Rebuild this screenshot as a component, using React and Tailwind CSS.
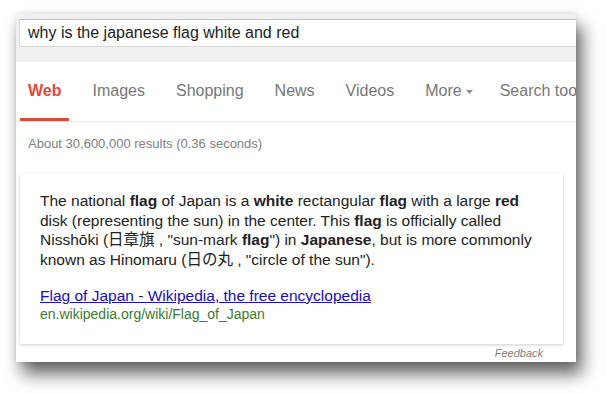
import React from 'react';

const tabs = ['Web', 'Images', 'Shopping', 'News', 'Videos', 'More', 'Search tools'];

const Tab = ({ label, active }) => (
  <div className="flex flex-col shrink-0">
    <div
      className={`h-[56px] pt-[2px] flex items-center text-[16px] whitespace-nowrap ${
        label === 'More' ? 'pl-2 pr-1' : 'px-2'
      } ${active ? 'font-bold text-[#dd4b39]' : 'text-[#777777]'}`}
    >
      {label}
      {label === 'More' && (
        <svg width="7" height="4" viewBox="0 0 7 4" className="ml-[4px] mt-[1px]">
          <path d="M0 0h7L3.5 4z" fill="#909090" />
        </svg>
      )}
    </div>
    <div className={`h-[3px] ${active ? 'bg-[#dd4b39]' : 'bg-transparent'}`} />
  </div>
);

export default function App() {
  return (
    <div className="w-[606px] h-[394px] bg-white pl-[16px] pt-[14px] font-['Liberation_Sans','Noto_Sans_CJK_JP',sans-serif]">
      <div className="w-[560px] h-[348px] bg-white overflow-hidden flex flex-col shadow-[6px_12px_16px_rgba(0,0,0,0.6),0_0_6px_rgba(0,0,0,0.12)]">
        {/* search header */}
        <div className="bg-[#f1f1f1] h-[48px] pt-[5px] pl-[3px] shrink-0">
          <div className="h-[28px] w-[600px] bg-white border border-[#d9d9d9] border-t-[#c0c0c0] pl-[8px] flex items-center text-[16px] text-[#222222] whitespace-nowrap">
            why is the japanese flag white and red
          </div>
        </div>

        {/* tabs */}
        <div className="flex gap-[15px] pl-[4px] border-b border-[#ebebeb] shrink-0">
          {tabs.map((t) => (
            <Tab key={t} label={t} active={t === 'Web'} />
          ))}
        </div>

        <div className="pl-[12px] pt-[14px] text-[13px] leading-[16px] text-[#808080] whitespace-nowrap">
          About 30,600,000 results (0.36 seconds)
        </div>

        {/* answer card */}
        <div className="ml-[4px] mr-[13px] mt-[21px] bg-white shadow-[0_1px_3px_rgba(0,0,0,0.2)] pl-[20px] pt-[18px] pb-[21px] text-[15.5px] leading-[19.5px] text-[#222222]">
          <div className="whitespace-nowrap">
            <div>
              The national <b>flag</b> of Japan is a <b>white</b> rectangular <b>flag</b> with a large <b>red</b>
            </div>
            <div>
              disk (representing the sun) in the center. This <b>flag</b> is officially called
            </div>
            <div>
              Nisshōki (日章旗 , "sun-mark <b>flag</b>") in <b>Japanese</b>, but is more commonly
            </div>
            <div>known as Hinomaru (日の丸 , "circle of the sun").</div>
          </div>
          <div className="mt-[17px] whitespace-nowrap">
            <a href="#" className="text-[#1a0dbb] underline">
              Flag of Japan - Wikipedia, the free encyclopedia
            </a>
          </div>
          <div className="text-[14px] leading-[17px] text-[#3d7a32] whitespace-nowrap">
            en.wikipedia.org/wiki/Flag_of_Japan
          </div>
        </div>

        <div className="mr-[33px] mt-[3px] text-right text-[11px] leading-[13px] italic text-[#808080]">
          Feedback
        </div>
      </div>
    </div>
  );
}
